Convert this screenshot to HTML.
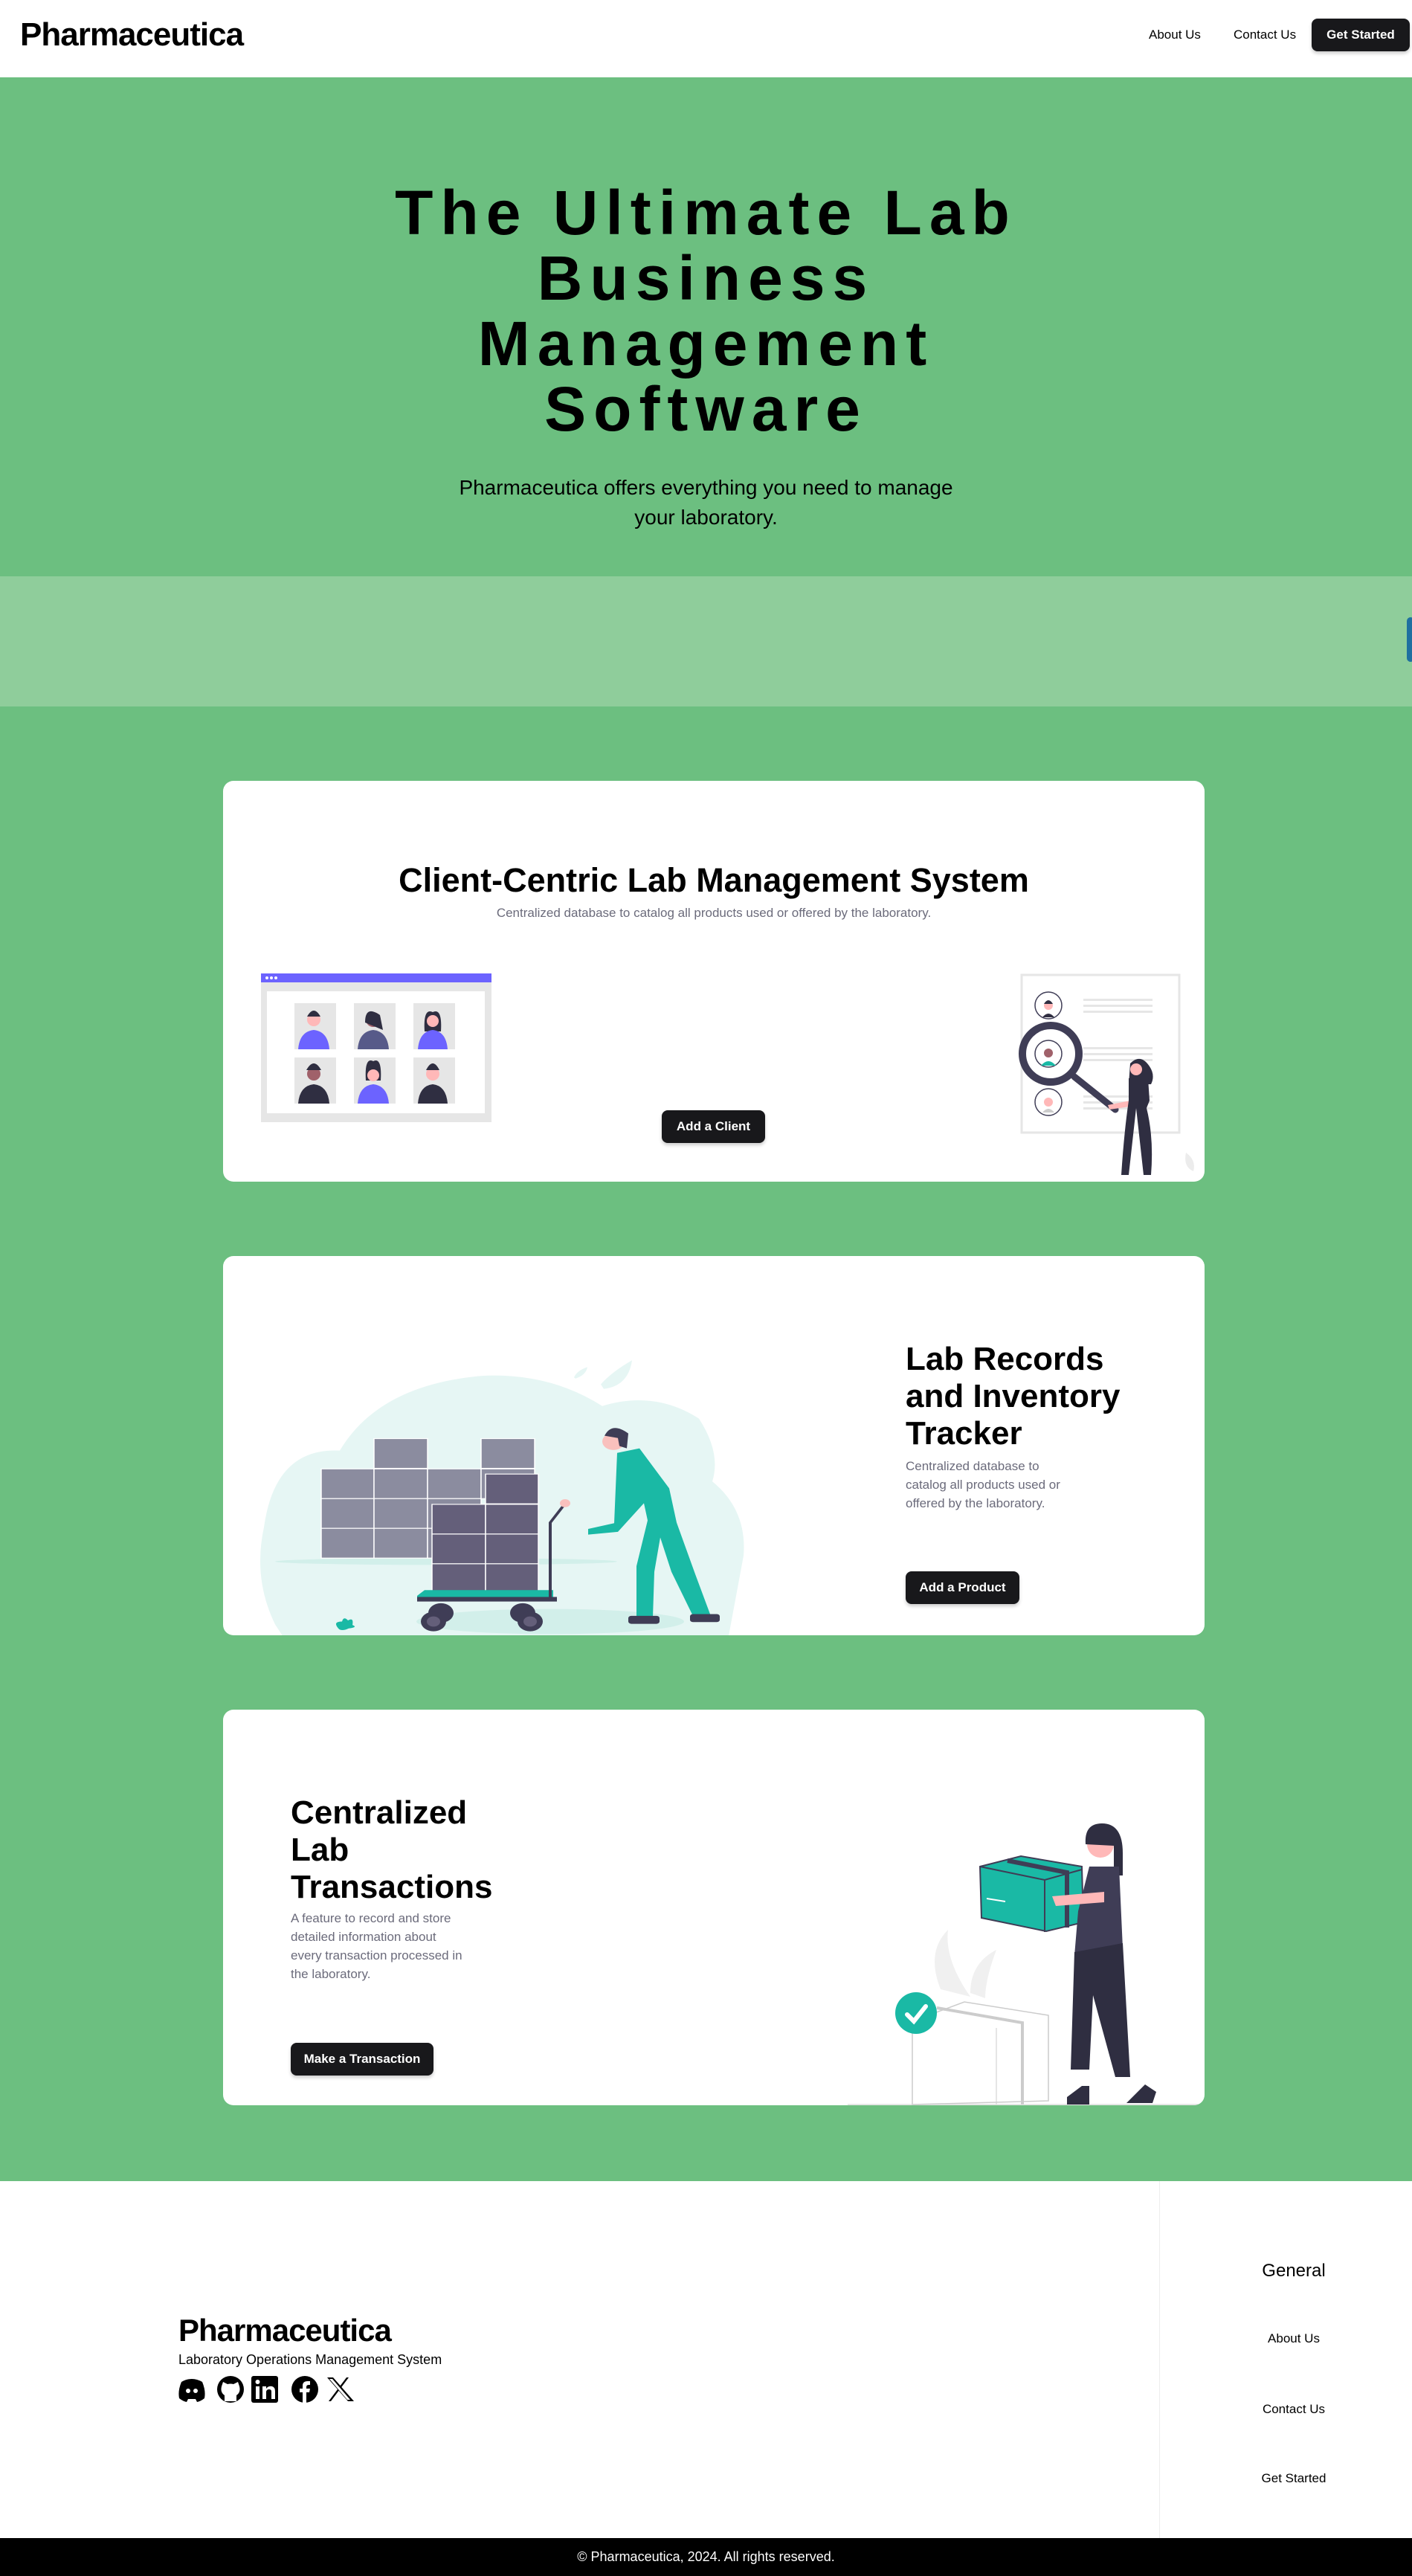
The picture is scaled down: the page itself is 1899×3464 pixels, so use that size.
<!DOCTYPE html>
<html><head><meta charset="utf-8"><style>
*{margin:0;padding:0;box-sizing:border-box}
body{width:1899px;height:3464px;position:relative;font-family:"Liberation Sans",sans-serif;background:#6cbf80;overflow:hidden}
.a{position:absolute}
.btn{position:absolute;background:#18181b;color:#fff;border-radius:8px;font-weight:bold;font-size:17px;display:flex;align-items:center;justify-content:center;box-shadow:0 3px 5px rgba(0,0,0,.2)}
.card{position:absolute;left:300px;width:1320px;background:#fff;border-radius:14px}
.h2{position:absolute;font-weight:bold;font-size:44px;line-height:50px;color:#000}
.p{position:absolute;font-size:17px;line-height:25px;color:#6b6b7b}
</style></head><body>
<div class="a" style="left:0;top:0;width:1899px;height:104px;background:#fff"></div>
<div class="a" style="left:27px;top:22px;font-size:44px;font-weight:bold;letter-spacing:-1px">Pharmaceutica</div>
<div class="a" style="left:1545px;top:37px;font-size:17px">About Us</div>
<div class="a" style="left:1659px;top:37px;font-size:17px">Contact Us</div>
<div class="btn" style="left:1764px;top:25px;width:132px;height:44px">Get Started</div>

<div class="a" style="left:0;top:242px;width:1899px;text-align:center;font-size:84px;line-height:88px;font-weight:bold;letter-spacing:10px">The Ultimate Lab<br>Business<br>Management<br>Software</div>
<div class="a" style="left:0;top:636px;width:1899px;text-align:center;font-size:28px;line-height:40px">Pharmaceutica offers everything you need to manage<br>your laboratory.</div>
<div class="a" style="left:0;top:775px;width:1899px;height:175px;background:#8fcd9b"></div>
<div class="a" style="left:1892px;top:830px;width:10px;height:60px;background:#1f6fa0;border-radius:6px"></div>

<!-- card1 -->
<div class="card" style="top:1050px;height:539px">
<div class="a" style="left:0;top:108px;width:1320px;text-align:center;font-size:45px;font-weight:bold">Client-Centric Lab Management System</div>
<div class="a" style="left:0;top:168px;width:1320px;text-align:center;font-size:17px;color:#6b6b7b">Centralized database to catalog all products used or offered by the laboratory.</div>
<div class="btn" style="left:590px;top:443px;width:139px;height:44px">Add a Client</div>
<svg class="a" style="left:51px;top:259px" width="310" height="200" viewBox="0 0 310 200">
<rect x="0" y="0" width="310" height="200" fill="#e6e6e6"/><rect x="0" y="0" width="310" height="12" fill="#6c63ff"/>
<circle cx="8" cy="6" r="2" fill="#fff"/><circle cx="14" cy="6" r="2" fill="#fff"/><circle cx="20" cy="6" r="2" fill="#fff"/>
<rect x="8" y="24" width="293" height="164" fill="#fff"/>
<rect x="45" y="40" width="56" height="62" fill="#e6e6e6"/><circle cx="71" cy="62" r="9" fill="#ffb8b8"/><path d="M62 58 q9 -16 18 0z" fill="#2f2e41"/><path d="M50 102 q2 -24 21 -26 q19 2 21 26z" fill="#6c63ff"/>
<rect x="125" y="40" width="56" height="62" fill="#e6e6e6"/><circle cx="151" cy="62" r="10" fill="#a0616a"/><path d="M140 66 q0 -24 20 -10 l4 20z" fill="#2f2e41"/><path d="M130 102 q2 -24 21 -26 q19 2 21 26z" fill="#575a89"/>
<rect x="205" y="40" width="56" height="62" fill="#e6e6e6"/><path d="M220 78 q-2 -32 11 -26 q13 -6 11 26z" fill="#2f2e41"/><circle cx="231" cy="64" r="8" fill="#ffb8b8"/><path d="M211 102 q2 -24 20 -26 q18 2 20 26z" fill="#6c63ff"/>
<rect x="45" y="113" width="56" height="62" fill="#e6e6e6"/><circle cx="71" cy="135" r="9" fill="#a0616a"/><path d="M61 130 q10 -18 20 0z" fill="#2f2e41"/><path d="M50 175 q2 -24 21 -26 q19 2 21 26z" fill="#2f2e41"/>
<rect x="125" y="113" width="56" height="62" fill="#e6e6e6"/><path d="M141 144 q-2 -32 10 -26 q12 -6 10 26z" fill="#2f2e41"/><circle cx="151" cy="137" r="8" fill="#ffb8b8"/><path d="M130 175 q2 -24 21 -26 q19 2 21 26z" fill="#6c63ff"/>
<rect x="205" y="113" width="56" height="62" fill="#e6e6e6"/><circle cx="231" cy="135" r="9" fill="#ffb8b8"/><path d="M222 130 q9 -18 18 0z" fill="#2f2e41"/><path d="M211 175 q2 -24 20 -26 q18 2 20 26z" fill="#2f2e41"/>
</svg>
<svg class="a" style="left:1060px;top:250px" width="260" height="290" viewBox="0 0 260 290">
<rect x="14" y="11" width="212" height="212" fill="#fff" stroke="#e6e6e6" stroke-width="3"/>
<g fill="#e6e6e6"><rect x="97" y="43" width="93" height="3"/><rect x="97" y="51" width="93" height="3"/><rect x="97" y="59" width="93" height="3"/><rect x="97" y="108" width="93" height="3"/><rect x="97" y="116" width="93" height="3"/><rect x="97" y="124" width="93" height="3"/><rect x="97" y="173" width="93" height="3"/><rect x="97" y="181" width="93" height="3"/><rect x="97" y="189" width="93" height="3"/></g>
<circle cx="50" cy="52" r="18" fill="#fff" stroke="#3f3d56" stroke-width="1.5"/><circle cx="50" cy="52" r="6" fill="#ffb8b8"/><path d="M44 50 q6 -10 12 0z" fill="#2f2e41"/><path d="M42 68 q8 -10 16 0z" fill="#2f2e41"/>
<circle cx="50" cy="182" r="18" fill="#fff" stroke="#3f3d56" stroke-width="1.5"/><circle cx="50" cy="182" r="6" fill="#ffb8b8"/><path d="M42 196 q8 -10 16 0z" fill="#ccc"/>
<circle cx="50" cy="117" r="18" fill="#fff" stroke="#3f3d56" stroke-width="1.5"/><circle cx="50" cy="116" r="6" fill="#a0616a"/><path d="M40 133 q10 -12 20 0z" fill="#1ab9a5"/>
<circle cx="53" cy="117" r="38" fill="none" stroke="#3f3d56" stroke-width="10"/>
<line x1="85" y1="148" x2="140" y2="192" stroke="#3f3d56" stroke-width="9" stroke-linecap="round"/>
<path d="M160 130 q14 -14 26 4 q8 12 2 24 l-30 0z" fill="#2f2e41"/><circle cx="168" cy="138" r="8" fill="#ffb8b8"/>
<path d="M130 186 l30 -6 l0 8 l-28 4z" fill="#ffb8b8"/>
<path d="M158 150 l26 0 l2 30 l-4 10 q10 40 6 90 l-10 0 l-10 -90 l-10 90 l-10 0 q4 -60 10 -100z" fill="#2f2e41"/>
<path d="M235 250 q14 10 10 25 q-14 -6 -10 -25z" fill="#ececec"/>
</svg>
</div>

<!-- card2 -->
<div class="card" style="top:1689px;height:510px;overflow:hidden">
<svg class="a" style="left:40px;top:111px" width="680" height="400" viewBox="0 0 680 400">
<g transform="scale(1,0.7687)">
<path d="M30 500 Q0 420 15 330 Q30 190 117 196 Q170 80 310 65 Q400 60 470 118 Q540 90 600 140 Q630 200 618 250 Q665 300 660 380 L640 520 L40 520z" fill="#e6f6f4"/>
<ellipse cx="260" cy="390" rx="230" ry="6" fill="#d2efea"/><ellipse cx="400" cy="495" rx="180" ry="22" fill="#d2efea"/>
<path d="M468 80 q15 -22 42 -42 q-5 45 -38 50z" fill="#e6f6f4"/><path d="M432 68 q4 -12 18 -18 q-2 14 -16 20z" fill="#e6f6f4"/>
<g fill="#8b8c9f" stroke="#fff" stroke-width="1.5">
<rect x="92" y="228" width="71" height="52"/><rect x="163" y="228" width="72" height="52"/><rect x="235" y="228" width="72" height="52"/><rect x="307" y="228" width="72" height="52"/>
<rect x="92" y="280" width="71" height="52"/><rect x="163" y="280" width="72" height="52"/><rect x="235" y="280" width="72" height="52"/>
<rect x="92" y="332" width="71" height="52"/><rect x="163" y="332" width="72" height="52"/><rect x="235" y="332" width="72" height="52"/>
<rect x="163" y="175" width="72" height="52"/><rect x="307" y="175" width="72" height="52"/></g>
<g fill="#645f7a" stroke="#fff" stroke-width="1.5">
<rect x="313" y="237" width="71" height="52"/><rect x="241" y="290" width="72" height="52"/><rect x="313" y="290" width="71" height="52"/>
<rect x="241" y="342" width="72" height="52"/><rect x="313" y="342" width="71" height="52"/><rect x="241" y="394" width="72" height="52"/><rect x="313" y="394" width="71" height="52"/></g>
<path d="M221 450 l10 -10 l173 0 l0 12 l-183 0z" fill="#1ab9a5"/><rect x="221" y="452" width="188" height="8" fill="#3f3d56"/>
<path d="M400 452 l0 -130 l18 -30" stroke="#3f3d56" stroke-width="4" fill="none"/>
<circle cx="253" cy="480" r="17" fill="#3f3d56"/><circle cx="363" cy="480" r="17" fill="#3f3d56"/>
<circle cx="243" cy="495" r="17" fill="#3f3d56"/><circle cx="243" cy="495" r="9" fill="#645f7a"/><circle cx="373" cy="495" r="17" fill="#3f3d56"/><circle cx="373" cy="495" r="9" fill="#645f7a"/>
<circle cx="485" cy="180" r="15" fill="#f9c0bd"/><path d="M473 170 q10 -25 32 -4 l-2 26 l-10 -4 l-2 -14z" fill="#3f3d56"/>
<path d="M490 200 l30 -8 l40 70 l10 60 l25 90 l20 70 l-22 6 l-30 -80 l-15 -60 l-8 60 l-2 80 l-22 0 l0 -90 l15 -80 l-5 -30 l-35 50 l-40 5 l0 -10 l35 -10z" fill="#1ab9a5"/>
<rect x="505" y="485" width="42" height="14" rx="4" fill="#3f3d56"/><rect x="588" y="482" width="40" height="14" rx="4" fill="#3f3d56"/>
<circle cx="420" cy="288" r="7" fill="#f9c0bd"/>
<path d="M115 507 q-8 -12 5 -12 q2 -10 8 -2 q8 -6 6 8 q8 4 -5 6 q-10 6 -14 0z" fill="#1ab9a5"/>
</g>
</svg>
<div class="h2" style="left:918px;top:114px">Lab Records<br>and Inventory<br>Tracker</div>
<div class="p" style="left:918px;top:270px">Centralized database to<br>catalog all products used or<br>offered by the laboratory.</div>
<div class="btn" style="left:918px;top:424px;width:153px;height:44px">Add a Product</div>
</div>

<!-- card3 -->
<div class="card" style="top:2299px;height:532px;overflow:hidden">
<div class="h2" style="left:91px;top:114px">Centralized<br>Lab<br>Transactions</div>
<div class="p" style="left:91px;top:268px">A feature to record and store<br>detailed information about<br>every transaction processed in<br>the laboratory.</div>
<div class="btn" style="left:91px;top:448px;width:192px;height:44px">Make a Transaction</div>
<svg class="a" style="left:820px;top:131px" width="500" height="410" viewBox="0 0 500 410">
<rect x="20" y="399" width="480" height="2" fill="#e6e6e6"/>
<path d="M145 245 q-20 -50 10 -80 q-5 40 30 90z M185 250 q0 -40 35 -58 q-15 40 -15 65z" fill="#f0f0f0"/>
<path d="M107 288 l70 -26 l113 18 l0 115 l-183 5z" fill="#fff" stroke="#ccc" stroke-width="1.5"/>
<path d="M140 270 l115 20 l0 110" stroke="#ccc" stroke-width="4" fill="none"/><line x1="220" y1="297" x2="220" y2="400" stroke="#ccc"/>
<circle cx="112" cy="277" r="28" fill="#1ab9a5"/><path d="M100 279 l9 9 l16 -20" stroke="#fff" stroke-width="6" fill="none" stroke-linecap="round"/>
<path d="M198 80 l55 -14 l82 14 l2 75 l-50 12 l-87 -18z" fill="#1ab9a5" stroke="#3f3d56" stroke-width="2"/>
<path d="M198 80 l87 18 l50 -14 M285 98 l0 70" stroke="#3f3d56" stroke-width="2" fill="none"/><path d="M235 72 l80 16 l0 74" stroke="#3f3d56" stroke-width="6" fill="none"/>
<line x1="207" y1="123" x2="232" y2="127" stroke="#fff" stroke-width="2"/>
<circle cx="360" cy="50" r="18" fill="#ffb8b8"/><path d="M340 50 q-2 -28 22 -28 q28 0 28 40 l0 30 l-12 0 l0 -40 l-38 -2z" fill="#2f2e41"/>
<path d="M345 80 l40 0 l5 110 l-65 10 l5 -60z" fill="#3f3d56"/>
<path d="M295 120 l70 -6 l0 14 l-65 5z" fill="#ffb8b8"/>
<path d="M325 195 l65 -12 l10 180 l-20 0 l-30 -110 l-5 100 l-25 0z" fill="#2f2e41"/>
<path d="M315 390 l20 -15 l10 0 l0 25 l-30 0z M395 398 l25 -25 l15 10 l-5 15z" fill="#2f2e41"/>
</svg>
</div>

<!-- footer -->
<div class="a" style="left:0;top:2933px;width:1899px;height:480px;background:#fff"></div>
<div class="a" style="left:1559px;top:2933px;width:1px;height:480px;background:#eee"></div>
<div class="a" style="left:240px;top:3110px;font-size:42px;font-weight:bold;letter-spacing:-1px">Pharmaceutica</div>
<div class="a" style="left:240px;top:3163px;font-size:18px">Laboratory Operations Management System</div>
<svg class="a" style="left:240px;top:3193px" width="240" height="40" viewBox="0 0 240 40">
<path d="M4 10 q14 -8 28 0 q5 12 3 22 q-5 4 -10 5 l-2 -4 l-10 0 l-2 4 q-5 -1 -10 -5 q-2 -10 3 -22z" fill="#000"/><circle cx="13" cy="22" r="3" fill="#fff"/><circle cx="23" cy="22" r="3" fill="#fff"/>
<circle cx="70" cy="20" r="18" fill="#000"/><path d="M62 36 l0 -8 q-6 -4 -4 -12 l2 -6 l6 3 q4 -1 8 0 l6 -3 l2 6 q2 8 -4 12 l0 8" fill="#fff"/>
<rect x="98" y="2" width="36" height="36" rx="3" fill="#000"/><rect x="104" y="16" width="5" height="17" fill="#fff"/><circle cx="106.5" cy="10" r="3" fill="#fff"/><path d="M113 16 l5 0 l0 3 q3 -4 8 -3 q4 1 4 7 l0 10 l-5 0 l0 -10 q0 -3 -3 -3 q-4 0 -4 4 l0 9 l-5 0z" fill="#fff"/>
<circle cx="170" cy="20" r="18" fill="#000"/><path d="M167 38 l0 -14 l-4 0 l0 -5 l4 0 l0 -4 q0 -6 7 -6 l3 0 l0 5 l-2 0 q-3 0 -3 3 l0 2 l5 0 l-1 5 l-4 0 l0 14z" fill="#fff"/>
<path d="M200 4 l8 0 l28 32 l-8 0z" fill="#000"/><path d="M226 4 l3 0 l-24 32 l-3 0z" fill="#000"/><path d="M203 6 l4 0 l24 28 l-4 0z" fill="#fff"/>
</svg>
<div class="a" style="left:1560px;top:3040px;width:360px;text-align:center;font-size:24px">General</div>
<div class="a" style="left:1560px;top:3135px;width:360px;text-align:center;font-size:17px">About Us</div>
<div class="a" style="left:1560px;top:3230px;width:360px;text-align:center;font-size:17px">Contact Us</div>
<div class="a" style="left:1560px;top:3323px;width:360px;text-align:center;font-size:17px">Get Started</div>
<div class="a" style="left:0;top:3413px;width:1899px;height:51px;background:#000;color:#fff;font-size:18px;text-align:center;line-height:51px">© Pharmaceutica, 2024. All rights reserved.</div>
</body></html>
